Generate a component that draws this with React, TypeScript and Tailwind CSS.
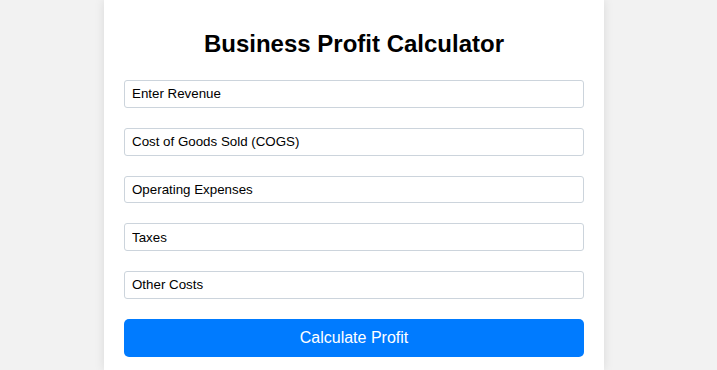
import { useState } from "react";

const fields = [
  "Enter Revenue",
  "Cost of Goods Sold (COGS)",
  "Operating Expenses",
  "Taxes",
  "Other Costs",
];

export default function App() {
  const [values, setValues] = useState<string[]>(fields.map(() => ""));

  return (
    <div className="flex h-[370px] justify-center overflow-hidden bg-[#f2f2f2] pr-[9px] font-['Liberation_Sans',Arial,sans-serif]">
      <div className="w-[500px] bg-white px-5 pt-[30px] shadow-[0_0_10px_rgba(0,0,0,0.1)]">
        <h2 className="mb-[22px] text-center text-[24px] font-bold leading-[28px] text-black">
          Business Profit Calculator
        </h2>
        <div className="flex flex-col">
          {fields.map((label, i) => (
            <input
              key={label}
              type="number"
              placeholder={label}
              value={values[i]}
              onChange={(e) => {
                const next = [...values];
                next[i] = e.target.value;
                setValues(next);
              }}
              className="mb-[20px] h-[27.75px] w-full rounded-[3px] border border-[#ccd4dc] px-[7px] text-[13.333px] text-black outline-none placeholder:text-black"
            />
          ))}
        </div>
        <button
          type="button"
          className="h-[38px] w-full rounded-[5px] bg-[#007bff] text-[16px] text-white"
        >
          Calculate Profit
        </button>
      </div>
    </div>
  );
}
